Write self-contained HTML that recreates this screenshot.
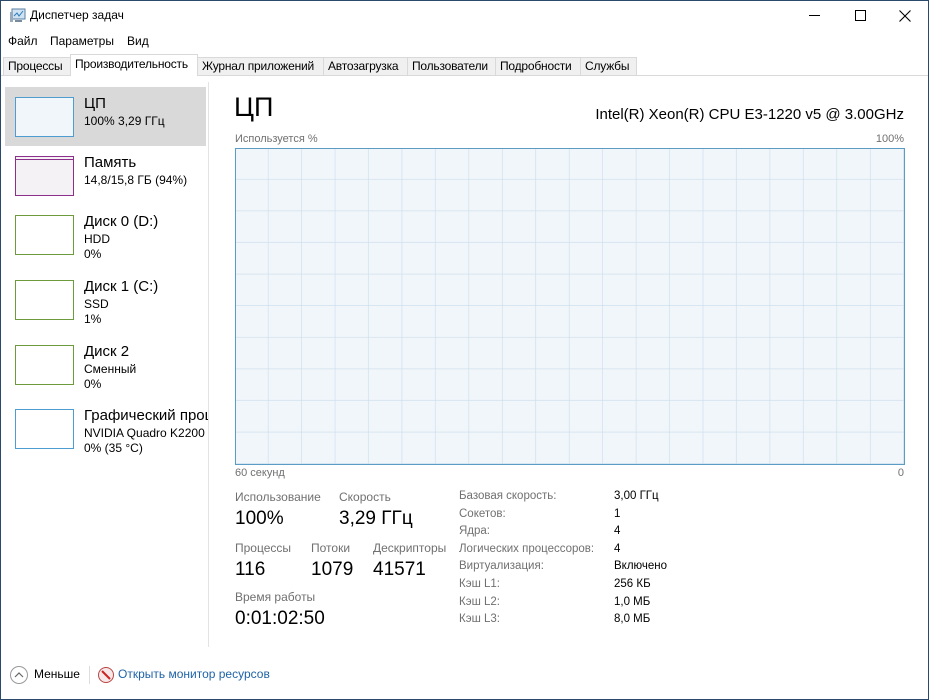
<!DOCTYPE html>
<html><head><meta charset="utf-8"><style>
*{margin:0;padding:0;box-sizing:border-box}
body{width:929px;height:700px;overflow:hidden;background:#fff;font-family:"Segoe UI","Liberation Sans","DejaVu Sans",sans-serif;color:#000;position:relative}
.a{position:absolute;white-space:nowrap}
.frame{position:absolute;left:0;top:0;width:929px;height:700px;border:1px solid #2b4a6b;pointer-events:none}
.tab{position:absolute;top:57px;height:18px;font-size:12px;padding:1px 4px;border:1px solid #d9d9d9;border-bottom:none;background:#f0f0f0;letter-spacing:-0.2px}
.th{position:absolute;left:15px;width:59px;height:40px;background:#fff}
.t1{font-size:15px}
.t2{font-size:12px;line-height:15px}
.lbl{font-size:12px;color:#707070}
.big{font-size:19px}
.dl{font-size:11.5px;color:#707070;line-height:17.6px}
.dv{font-size:11.5px;line-height:17.6px}
</style></head><body>
<svg class="a" style="left:9px;top:8px" width="18" height="16" viewBox="0 0 18 16"><rect x="3" y="1" width="13" height="10" fill="#cfe3f3" stroke="#5a7fa3"/><polyline points="5,8 8,5 10,8 14,3" fill="none" stroke="#2a7ab8"/><rect x="1" y="4" width="3" height="10" fill="#9ab"/><rect x="6" y="12" width="7" height="2" fill="#7a8a9a"/></svg>
<div class="a" style="left:30px;top:8px;font-size:12px">Диспетчер задач</div>
<div class="a" style="left:809px;top:15px;width:11px;height:1px;background:#000"></div>
<div class="a" style="left:855px;top:10px;width:11px;height:11px;border:1px solid #000"></div>
<svg class="a" style="left:899px;top:10px" width="12" height="12"><path d="M0.5 0.5L11.5 11.5M11.5 0.5L0.5 11.5" stroke="#000" stroke-width="1.1"/></svg>
<div class="a" style="left:8px;top:34px;font-size:12px">Файл</div>
<div class="a" style="left:50px;top:34px;font-size:12px">Параметры</div>
<div class="a" style="left:127px;top:34px;font-size:12px">Вид</div>
<div class="a" style="left:0;top:75px;width:929px;height:1px;background:#d9d9d9"></div>
<div class="tab" style="left:3px;width:68px">Процессы</div>
<div class="tab" style="left:70px;top:54px;height:22px;width:128px;background:#fff;padding-top:2px">Производительность</div>
<div class="tab" style="left:197px;width:127px">Журнал приложений</div>
<div class="tab" style="left:323px;width:85px">Автозагрузка</div>
<div class="tab" style="left:407px;width:89px">Пользователи</div>
<div class="tab" style="left:495px;width:86px">Подробности</div>
<div class="tab" style="left:580px;width:57px">Службы</div>

<div class="a" style="left:5px;top:87px;width:201px;height:59px;background:#d9d9d9"></div>
<div class="a" style="left:208px;top:82px;width:1px;height:565px;background:#e3e3e3"></div>

<div class="th" style="top:97px;border:1px solid #4f9cd1;background:#f1f6fa"></div>
<div class="a t1" style="left:84px;top:95px">ЦП</div>
<div class="a t2" style="left:84px;top:114px">100% 3,29 ГГц</div>

<div class="th" style="top:156px;border:1px solid #8b2f8b;background:#f4f2f4"><div style="margin-top:2px;height:1px;background:#8b2f8b"></div></div>
<div class="a t1" style="left:84px;top:154px">Память</div>
<div class="a t2" style="left:84px;top:173px">14,8/15,8 ГБ (94%)</div>

<div class="th" style="top:215px;border:1px solid #6c9a3c"></div>
<div class="a t1" style="left:84px;top:213px">Диск 0 (D:)</div>
<div class="a t2" style="left:84px;top:232px">HDD<br>0%</div>

<div class="th" style="top:280px;border:1px solid #6c9a3c"></div>
<div class="a t1" style="left:84px;top:278px">Диск 1 (C:)</div>
<div class="a t2" style="left:84px;top:297px">SSD<br>1%</div>

<div class="th" style="top:345px;border:1px solid #6c9a3c"></div>
<div class="a t1" style="left:84px;top:343px">Диск 2</div>
<div class="a t2" style="left:84px;top:362px">Сменный<br>0%</div>

<div class="th" style="top:409px;border:1px solid #4f9cd1"></div>
<div class="a t1" style="left:84px;top:407px;width:124px;overflow:hidden">Графический процессор</div>
<div class="a t2" style="left:84px;top:426px">NVIDIA Quadro K2200<br>0% (35 °C)</div>

<div class="a" style="left:234px;top:92px;font-size:27px">ЦП</div>
<div class="a" style="right:25px;top:106px;font-size:15px">Intel(R) Xeon(R) CPU E3-1220 v5 @ 3.00GHz</div>
<div class="a lbl" style="left:235px;top:133px;font-size:11px">Используется %</div>
<div class="a lbl" style="right:25px;top:133px;font-size:11px">100%</div>
<svg class="a" style="left:235px;top:148px" width="670" height="317">
<defs><pattern id="g" width="33.45" height="31.6" patternUnits="userSpaceOnUse"><path d="M33.45 0V31.6M0 31.6H33.45" stroke="#c9dcec" stroke-width="1.2" fill="none"/></pattern></defs>
<rect x="0.5" y="0.5" width="669" height="316" fill="#f1f6fa"/>
<rect x="0.5" y="0.5" width="669" height="316" fill="url(#g)"/>
<rect x="0.5" y="0.5" width="669" height="316" fill="none" stroke="#5a9cc4"/>
</svg>
<div class="a lbl" style="left:235px;top:467px;font-size:11px">60 секунд</div>
<div class="a lbl" style="right:25px;top:467px;font-size:11px">0</div>

<div class="a lbl" style="left:235px;top:490px">Использование</div>
<div class="a big" style="left:235px;top:508px">100%</div>
<div class="a lbl" style="left:339px;top:490px">Скорость</div>
<div class="a big" style="left:339px;top:508px">3,29 ГГц</div>
<div class="a lbl" style="left:235px;top:541px">Процессы</div>
<div class="a big" style="left:235px;top:559px">116</div>
<div class="a lbl" style="left:311px;top:541px">Потоки</div>
<div class="a big" style="left:311px;top:559px">1079</div>
<div class="a lbl" style="left:373px;top:541px">Дескрипторы</div>
<div class="a big" style="left:373px;top:559px">41571</div>
<div class="a lbl" style="left:235px;top:590px">Время работы</div>
<div class="a big" style="left:235px;top:608px">0:01:02:50</div>

<div class="a dl" style="left:459px;top:488px">Базовая скорость:<br>Сокетов:<br>Ядра:<br>Логических процессоров:<br>Виртуализация:<br>Кэш L1:<br>Кэш L2:<br>Кэш L3:</div>
<div class="a dv" style="left:614px;top:488px">3,00 ГГц<br>1<br>4<br>4<br>Включено<br>256 КБ<br>1,0 МБ<br>8,0 МБ</div>

<svg class="a" style="left:9px;top:665px" width="20" height="20"><circle cx="10" cy="10" r="8.5" fill="#fff" stroke="#999"/><path d="M6 12L10 8L14 12" fill="none" stroke="#666" stroke-width="1.2"/></svg>
<div class="a" style="left:34px;top:667px;font-size:12px">Меньше</div>
<div class="a" style="left:89px;top:666px;width:1px;height:18px;background:#ddd"></div>
<svg class="a" style="left:97px;top:666px" width="18" height="18"><circle cx="9" cy="9" r="7.5" fill="#f6e8e8" stroke="#b44"/><path d="M5 5L13 13" stroke="#c22" stroke-width="2"/></svg>
<div class="a" style="left:118px;top:667px;font-size:12px;color:#1e63a8">Открыть монитор ресурсов</div>
<div class="frame"></div>
</body></html>
